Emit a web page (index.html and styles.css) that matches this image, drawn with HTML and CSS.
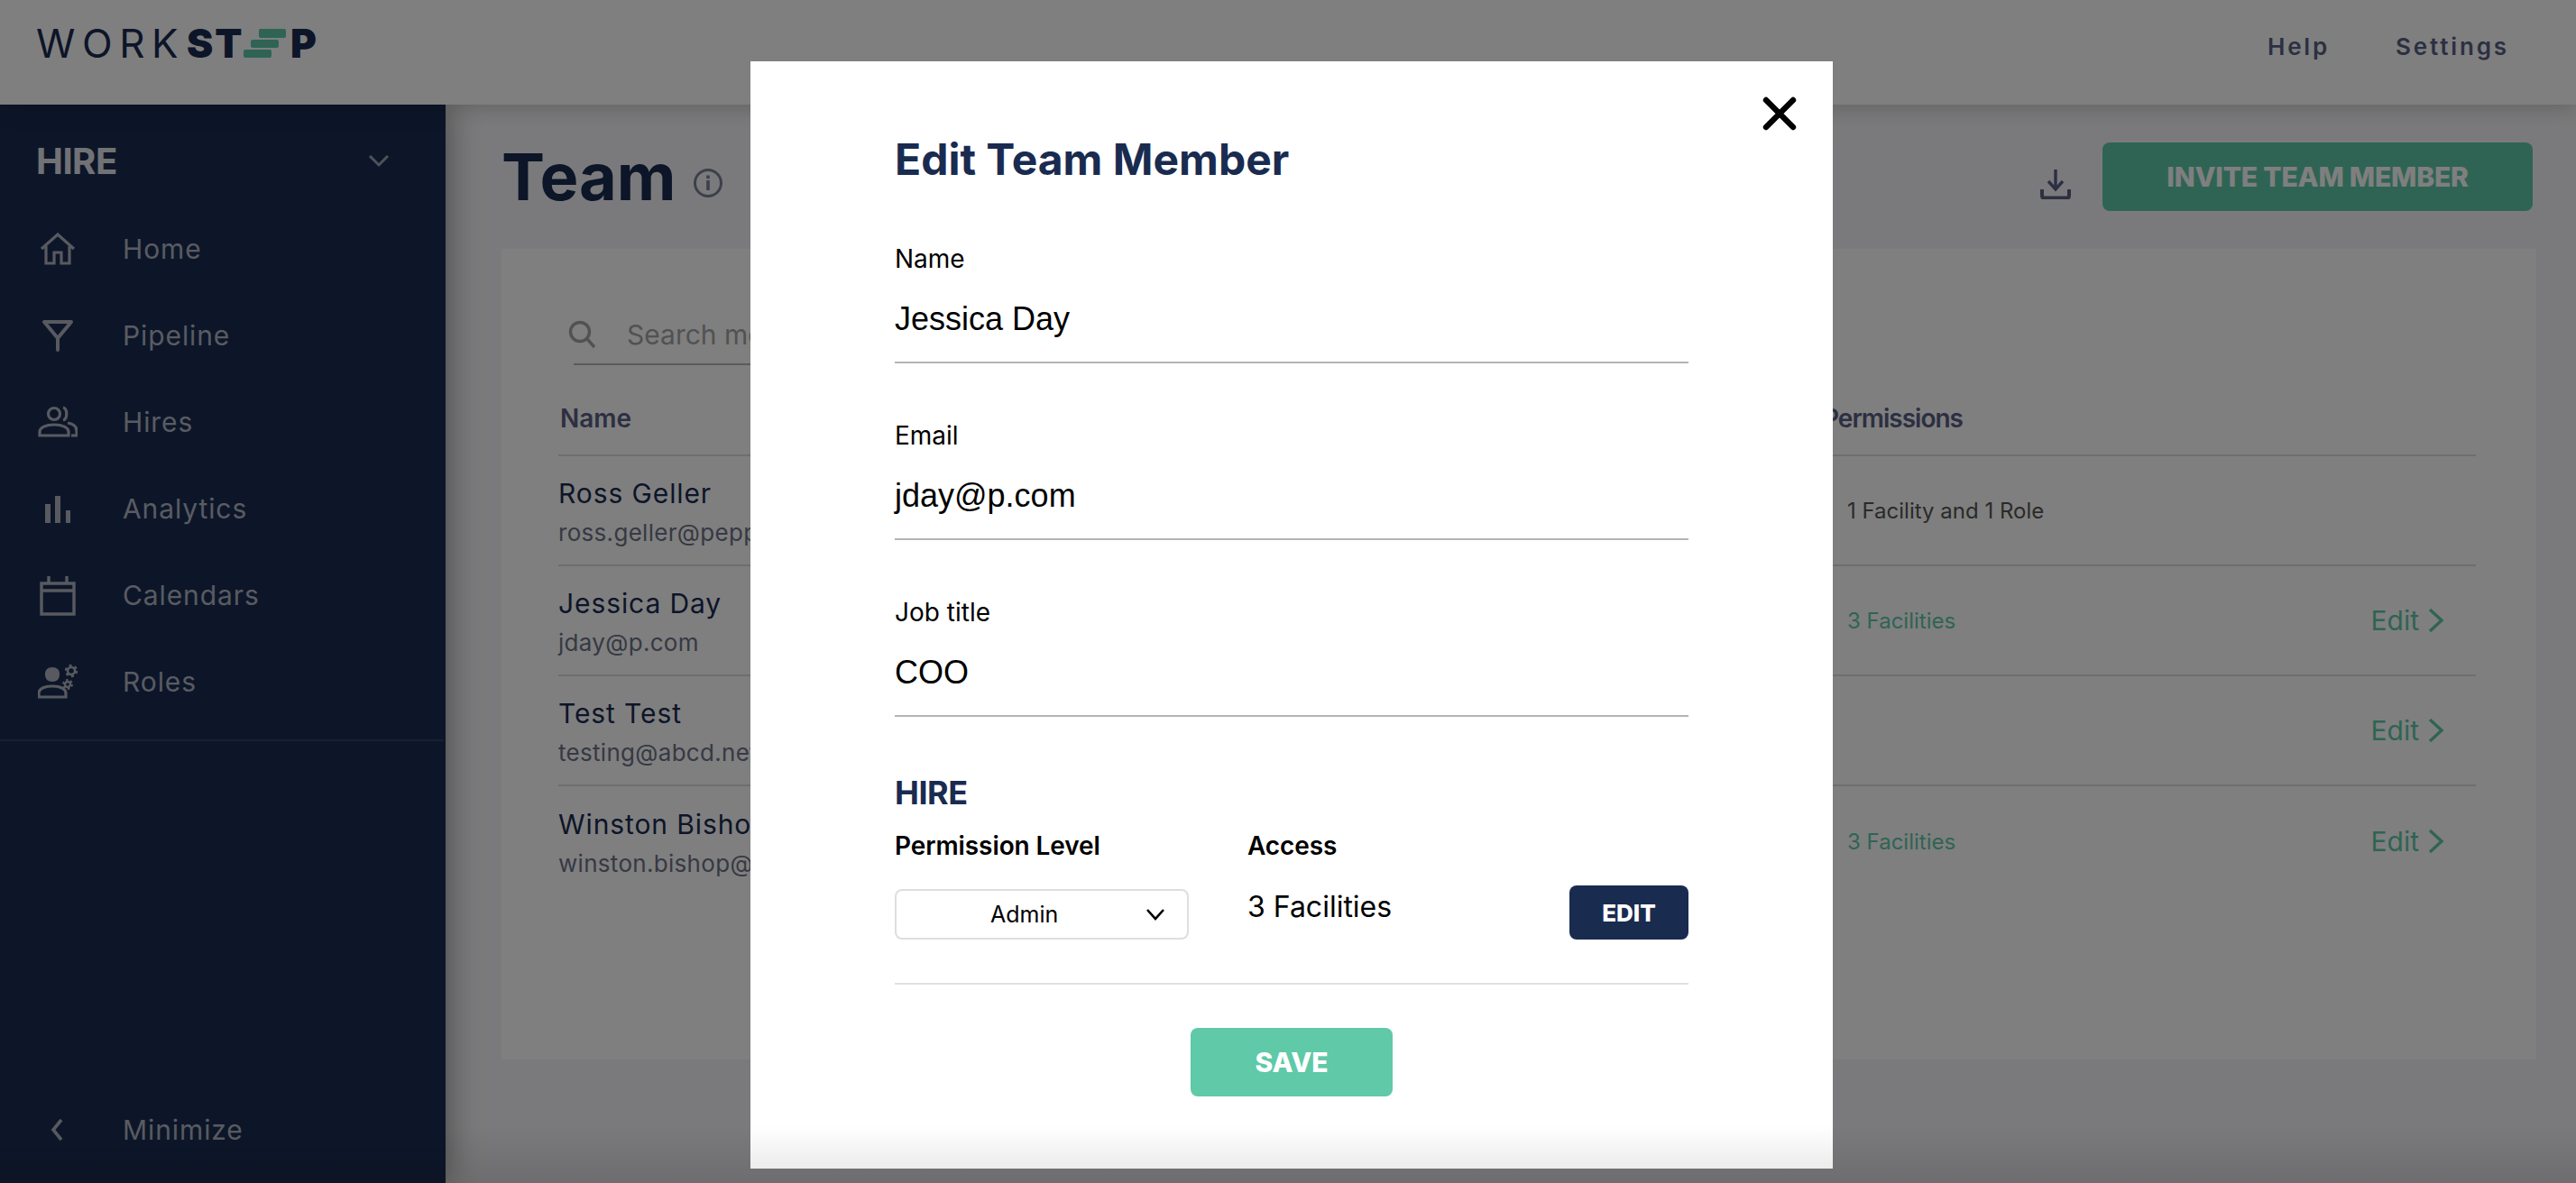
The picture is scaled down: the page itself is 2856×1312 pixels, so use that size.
FILE: index.html
```html
<!DOCTYPE html>
<html lang="en">
<head>
<meta charset="utf-8">
<title>Team</title>
<link rel="stylesheet" href="styles.css">
</head>
<body>
<header class="topbar">
  <div class="logo">
    <span class="logo-work">WORK</span><span class="logo-st">ST</span>
    <svg class="logo-bricks" viewBox="0 0 47 32" width="47" height="32"><rect x="17" y="0" width="30" height="10" rx="2"/><rect x="8" y="12" width="31" height="9" rx="2"/><rect x="0" y="23" width="31" height="9" rx="2"/></svg>
    <span class="logo-p">P</span>
  </div>
  <nav class="topnav"><a>Help</a><a>Settings</a></nav>
</header>
<div class="shell">
  <aside class="sidebar">
    <div class="product"><span>HIRE</span>
      <svg width="24" height="16" viewBox="0 0 24 16" class="ic"><path d="M2 3l10 10L22 3" fill="none" stroke-width="3"/></svg>
    </div>
    <ul class="menu">
      <li><svg width="44" height="36" viewBox="0 0 44 36" class="ic"><path d="M4 18L22 2l18 16M9 15v19h9V22h8v12h9V15" fill="none" stroke-width="3.2"/></svg><span>Home</span></li>
      <li><svg width="44" height="36" viewBox="0 0 44 36" class="ic"><path d="M7 3h30L22 21zM22 20v14" fill="none" stroke-width="4" stroke-linejoin="round" stroke-linecap="round"/></svg><span>Pipeline</span></li>
      <li><svg width="44" height="36" viewBox="0 0 44 36" class="ic"><circle class="ring" cx="18" cy="9" r="6.5" stroke-width="3.2"/><path d="M2 33v-4c0-5 7-8 16-8s16 3 16 8v4zM28 2c5 1 5 13 0 14M33 19c6 1 10 4 10 9v5h-6" fill="none" stroke-width="3.2"/></svg><span>Hires</span></li>
      <li><svg width="44" height="36" viewBox="0 0 44 36" class="ic bars"><rect x="8" y="13" width="6" height="21"/><rect x="19" y="4" width="6" height="30"/><rect x="31" y="20" width="5" height="14"/></svg><span>Analytics</span></li>
      <li class="tall"><svg width="44" height="46" viewBox="0 0 44 46" class="ic"><path d="M4 10h36v34H4zM4 18h36M12 2v8M32 2v8" fill="none" stroke-width="3.4"/></svg><span>Calendars</span></li>
      <li><svg width="44" height="38" viewBox="0 0 44 38" class="ic"><path d="M1 36v-4c0-5 6-8 15-8s15 3 15 8v4z" fill="none" stroke-width="3.2"/><path class="solid" d="M8 10c0-4 3-7 8-7s8 3 8 7v1c0 5-3 8-8 8s-8-3-8-8z"/><circle class="ring" cx="37" cy="7" r="4" stroke-width="2.6"/><circle class="teeth" cx="37" cy="7" r="6" stroke-width="2.4" stroke-dasharray="3 3.280"/><circle class="ring" cx="33" cy="22" r="3" stroke-width="2.4"/><circle class="teeth" cx="33" cy="22" r="4.800" stroke-width="2.200" stroke-dasharray="2.500 2.530"/></svg><span>Roles</span></li>
    </ul>
    <div class="minimize"><svg width="44" height="26" viewBox="0 0 44 26" class="ic"><path d="M26 2L17 13l9 11" fill="none" stroke-width="3.6"/></svg><span>Minimize</span></div>
  </aside>
  <main class="content">
    <div class="titlebar">
      <h1>Team</h1>
      <svg class="info" width="34" height="34" viewBox="0 0 34 34"><circle class="ring" cx="17" cy="17" r="14.5" stroke-width="3"/><rect x="15.2" y="14" width="3.6" height="11"/><rect x="15.2" y="8.5" width="3.6" height="3.6"/></svg>
      <svg class="download" width="34" height="34" viewBox="0 0 34 34"><path d="M17 1v21M9 14l8 9 8-9" fill="none" stroke-width="3.4"/><path d="M2 23v7c0 1.500 1 2.500 2.500 2.500h25c1.500 0 2.500-1 2.500-2.500v-7" fill="none" stroke-width="4"/></svg>
      <button class="invite">INVITE TEAM MEMBER</button>
    </div>
    <section class="card">
      <div class="search">
        <svg width="32" height="34" viewBox="0 0 32 34"><circle cx="13" cy="14" r="10.500" fill="none" stroke-width="3.4"/><path d="M21 22l8 9" fill="none" stroke-width="3.4"/></svg>
        <span>Search members</span>
      </div>
      <div class="thead"><span>Name</span><span class="th-perm">Permissions</span></div>
      <div class="row">
        <div class="who"><b>Ross Geller</b><i>ross.geller@pepper.com</i></div>
        <div class="perm plain">1 Facility and 1 Role</div>
      </div>
      <div class="row">
        <div class="who"><b>Jessica Day</b><i>jday@p.com</i></div>
        <div class="perm">3 Facilities</div>
        <a class="edit">Edit <svg width="18" height="28" viewBox="0 0 18 28"><path d="M2 2l13 12L2 26" fill="none" stroke-width="3.400"/></svg></a>
      </div>
      <div class="row">
        <div class="who"><b>Test Test</b><i>testing@abcd.net</i></div>
        <div class="perm"></div>
        <a class="edit">Edit <svg width="18" height="28" viewBox="0 0 18 28"><path d="M2 2l13 12L2 26" fill="none" stroke-width="3.400"/></svg></a>
      </div>
      <div class="row last">
        <div class="who"><b>Winston Bishop</b><i>winston.bishop@pepper.com</i></div>
        <div class="perm">3 Facilities</div>
        <a class="edit">Edit <svg width="18" height="28" viewBox="0 0 18 28"><path d="M2 2l13 12L2 26" fill="none" stroke-width="3.400"/></svg></a>
      </div>
    </section>
  </main>
</div>
<div class="overlay">
  <div class="modal">
    <svg class="close" width="40" height="40" viewBox="0 0 40 40"><path d="M5 5l30 30M35 5L5 35" fill="none" stroke="#000" stroke-width="6.400" stroke-linecap="round"/></svg>
    <h2>Edit Team Member</h2>
    <div class="field"><label>Name</label><div class="value">Jessica Day</div></div>
    <div class="field"><label>Email</label><div class="value">jday@p.com</div></div>
    <div class="field"><label>Job title</label><div class="value">COO</div></div>
    <h3>HIRE</h3>
    <div class="perms">
      <div class="col-level">
        <div class="perm-label">Permission Level</div>
        <div class="select"><span>Admin</span><svg width="22" height="14" viewBox="0 0 22 14"><path d="M2 2l9 10 9-10" fill="none" stroke="#000" stroke-width="2.600"/></svg></div>
      </div>
      <div class="col-access">
        <div class="perm-label">Access</div>
        <div class="access-row"><span class="access-text">3 Facilities</span><button class="btn-edit">EDIT</button></div>
      </div>
    </div>
    <div class="actions"><button class="btn-save">SAVE</button></div>
  </div>
</div>
<div class="fade"></div>
</body>
</html>
```
FILE: styles.css
```css
* { box-sizing: border-box; }
html, body { margin: 0; height: 100%; }
body {
  width: 2856px; height: 1312px; overflow: hidden; position: relative;
  font-family: Inter, "Noto Sans", sans-serif;
  background: #f5f5f8; display: flex; flex-direction: column;
}
h1, h2, h3, ul { margin: 0; padding: 0; }
ul { list-style: none; }
button { border: 0; font-family: inherit; }

.topbar {
  height: 116px; background: #fff; flex: none; display: flex; justify-content: space-between;
  padding: 32px 74px 0 40px; position: relative; z-index: 2;
  box-shadow: 0 2px 24px rgba(0,0,0,.22);
}
.logo { display: flex; align-items: flex-start; height: 32px; color: #1a2b50; font-size: 44px; line-height: 32px; }
.logo-work { font-weight: 400; letter-spacing: 7.600px; width: 167px; }
.logo-st { font-weight: 900; letter-spacing: 2px; width: 63px; }
.logo-bricks { fill: #5fc9a8; flex: none; margin-right: 5px; }
.logo-p { font-weight: 900; }
.topnav { display: flex; gap: 73px; font-size: 26px; font-weight: 600; letter-spacing: 2.850px; color: #5a5f85; height: 40px; line-height: 40px; }

.shell { flex: 1; display: flex; min-height: 0; }
.sidebar {
  width: 494px; flex: none; background: #1a2c52; color: #b3b7c4; position: relative; z-index: 1;
  display: flex; flex-direction: column; box-shadow: 0 0 36px rgba(0,0,0,.45);
}
.ic { stroke: #b0b4c0; fill: #b0b4c0; flex: none; }
.ic .ring, .ic .teeth { fill: none; }
.ic .solid { stroke: none; }
.ic.bars { stroke: none; }
.product { display: flex; justify-content: space-between; align-items: center; padding: 38px 62px 0 40px; height: 86px; font-size: 40px; font-weight: 700; letter-spacing: -.5px; color: #fff; opacity: .88; }
.menu { padding-top: 26px; border-bottom: 2px solid #33415e; width: 492px; height: 620px; }
.menu li { display: flex; align-items: center; height: 96px; padding-left: 42px; gap: 50px; font-size: 30px; letter-spacing: .9px; }
.minimize { margin-top: auto; display: flex; align-items: center; gap: 50px; height: 96px; padding: 0 0 22px 42px; font-size: 30px; letter-spacing: .9px; }

.content { flex: 1; padding: 0 44px 0 62px; min-width: 0; }
.titlebar { display: flex; align-items: center; height: 160px; padding-right: 4px; }
h1 { font-size: 72px; font-weight: 700; line-height: 88px; color: #1a2b50; margin-right: 18px; }
.info { fill: #7a8094; stroke: #7a8094; margin-top: 14px; }
.info .ring { fill: none; }
.info rect { stroke: none; }
.download { stroke: #5a5f85; margin: 16px 35px 0 auto; }
.invite { width: 477px; height: 76px; background: #5fc9a8; color: #fff; font-size: 30px; font-weight: 800; border-radius: 8px; letter-spacing: -.2px; }

.card { background: #fff; height: 899px; padding: 0 67px 0 63px; }
.search { display: flex; align-items: center; gap: 33px; height: 129px; margin-left: 17px; width: 360px; padding-top: 62px; border-bottom: 2px solid #b4b4b4; color: #a4a4a4; font-size: 30px; white-space: nowrap; }
.search svg { stroke: #a4a4a4; flex: none; margin-left: -6px; }
.thead { display: grid; grid-template-columns: 1400px 1fr; height: 101px; padding: 42px 0 0 2px; line-height: 34px; font-size: 28px; font-weight: 600; color: #5a5f85; border-bottom: 2px solid #dcdce0; }
.th-perm { letter-spacing: -1px; }
.row { display: grid; grid-template-columns: 1400px 1fr auto; align-items: center; height: 122px; border-bottom: 2px solid #dcdce0; padding-right: 35px; }
.row.last { border-bottom: 0; }
.who { display: flex; flex-direction: column; gap: 4px; padding-top: 6px; }
.who b { font-weight: 400; font-size: 30px; line-height: 40px; letter-spacing: .9px; color: #1a2b50; }
.who i { font-style: normal; font-size: 26px; line-height: 40px; letter-spacing: .3px; color: #6e7288; }
.perm { padding-left: 29px; font-size: 24px; color: #5fc9a8; }
.perm.plain { color: #555; }
.edit { display: flex; align-items: center; gap: 10px; font-size: 30px; color: #5fc9a8; }
.edit svg { stroke: #5fc9a8; }

.overlay { position: absolute; inset: 0; background: rgba(0,0,0,.5); z-index: 5; display: flex; justify-content: center; padding: 68px 0 0 8px; }
.modal { position: relative; width: 1200px; height: 1228px; background: #fff; padding: 77px 160px 0; }
.close { position: absolute; top: 38px; right: 39px; }
h2 { font-size: 48px; line-height: 64px; font-weight: 700; color: #1a2b50; margin-bottom: 60px; }
.field { height: 196px; }
.field label { display: block; font-size: 28px; line-height: 36px; color: #000; }
.field .value { font-family: "Liberation Sans", Arial, sans-serif; font-size: 36px; line-height: 44px; margin-top: 27px; height: 71px; border-bottom: 2px solid #b4b4b4; color: #000; }
h3 { font-size: 36px; line-height: 44px; font-weight: 700; color: #1a2b50; letter-spacing: -.5px; }
.perms { display: flex; margin-top: 19px; border-bottom: 2px solid #e0e0e0; height: 172px; }
.col-level { width: 391px; }
.col-access { flex: 1; }
.perm-label { font-size: 28px; font-weight: 600; line-height: 36px; color: #000; letter-spacing: -.1px; }
.select { width: 326px; height: 56px; margin-top: 30px; border: 2px solid #dedede; border-radius: 8px; display: flex; align-items: center; justify-content: space-between; padding: 0 24px 0 104px; font-size: 25px; color: #000; }
.access-row { display: flex; justify-content: space-between; margin-top: 26px; }
.access-text { font-size: 32px; line-height: 44px; color: #000; padding-top: 2px; }
.btn-edit { width: 132px; height: 60px; background: #1a2b50; color: #fff; font-size: 26px; font-weight: 800; border-radius: 8px; }
.actions { display: flex; justify-content: center; margin-top: 48px; }
.btn-save { width: 224px; height: 76px; background: #5fc9a8; color: #fff; font-size: 30px; font-weight: 800; border-radius: 8px; }
.fade { position: absolute; left: 0; right: 0; bottom: 0; height: 64px; z-index: 6; background: linear-gradient(to bottom, rgba(0,0,0,0), rgba(0,0,0,.1)); }
```
